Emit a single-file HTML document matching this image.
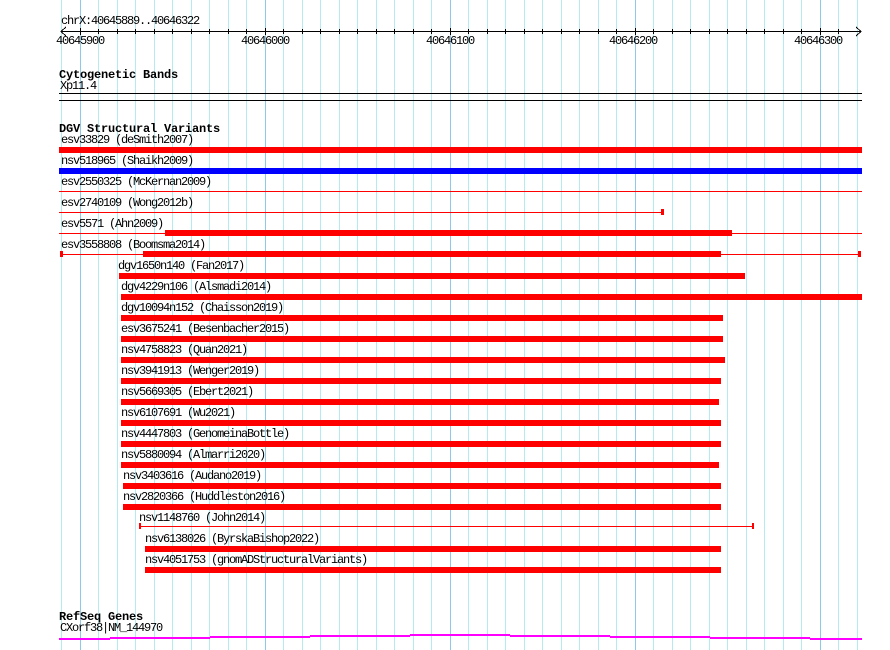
<!DOCTYPE html>
<html><head><style>
body{margin:0;width:890px;height:650px;background:#fff;position:relative;overflow:hidden;font-family:"Liberation Mono",monospace;}
.g{position:absolute;top:0;width:1px;height:650px;background:#b4eaf0}
.d{background:#90c8e8}
.t{position:absolute;font-size:12px;line-height:12px;letter-spacing:-1.2px;color:#000;white-space:pre;margin-top:0px}
.h{position:absolute;font-size:12px;line-height:12px;font-weight:bold;color:#000;letter-spacing:-0.2px;margin-top:1px}
.b{position:absolute;height:6px;background:#f00}
.l{position:absolute;height:1px;background:#f00}
.k{position:absolute;width:3px;height:6px;background:#f00}
.m{position:absolute;height:2px;background:#f0f}
</style></head><body>
<div class="g" style="left:61px"></div><div class="g d" style="left:80px"></div><div class="g" style="left:98px"></div><div class="g" style="left:117px"></div><div class="g" style="left:135px"></div><div class="g" style="left:154px"></div><div class="g" style="left:172px"></div><div class="g" style="left:191px"></div><div class="g" style="left:209px"></div><div class="g" style="left:228px"></div><div class="g" style="left:246px"></div><div class="g d" style="left:265px"></div><div class="g" style="left:283px"></div><div class="g" style="left:302px"></div><div class="g" style="left:320px"></div><div class="g" style="left:339px"></div><div class="g" style="left:357px"></div><div class="g" style="left:376px"></div><div class="g" style="left:394px"></div><div class="g" style="left:413px"></div><div class="g" style="left:431px"></div><div class="g d" style="left:450px"></div><div class="g" style="left:468px"></div><div class="g" style="left:487px"></div><div class="g" style="left:505px"></div><div class="g" style="left:524px"></div><div class="g" style="left:542px"></div><div class="g" style="left:561px"></div><div class="g" style="left:579px"></div><div class="g" style="left:598px"></div><div class="g" style="left:616px"></div><div class="g d" style="left:635px"></div><div class="g" style="left:653px"></div><div class="g" style="left:672px"></div><div class="g" style="left:690px"></div><div class="g" style="left:709px"></div><div class="g" style="left:727px"></div><div class="g" style="left:746px"></div><div class="g" style="left:764px"></div><div class="g" style="left:783px"></div><div class="g" style="left:801px"></div><div class="g d" style="left:820px"></div><div class="g" style="left:838px"></div><div class="g" style="left:857px"></div>

<div class="t" style="left:61px;top:15px">chrX:40645889..40646322</div>
<svg style="position:absolute;left:0;top:0" width="890" height="60">
<g stroke="#000" stroke-width="1" fill="none" shape-rendering="crispEdges">
<line x1="61" y1="31.5" x2="861" y2="31.5"/>
<polyline points="66,27 61,31.5 66,36"/>
<polyline points="856,27 861,31.5 856,36"/>
</g>
<g stroke="#000" shape-rendering="crispEdges">
<line x1="80.5" y1="28" x2="80.5" y2="35"/><line x1="98.5" y1="29" x2="98.5" y2="34"/><line x1="117.5" y1="29" x2="117.5" y2="34"/><line x1="135.5" y1="29" x2="135.5" y2="34"/><line x1="154.5" y1="29" x2="154.5" y2="34"/><line x1="172.5" y1="29" x2="172.5" y2="34"/><line x1="191.5" y1="29" x2="191.5" y2="34"/><line x1="209.5" y1="29" x2="209.5" y2="34"/><line x1="228.5" y1="29" x2="228.5" y2="34"/><line x1="246.5" y1="29" x2="246.5" y2="34"/><line x1="265.5" y1="28" x2="265.5" y2="35"/><line x1="283.5" y1="29" x2="283.5" y2="34"/><line x1="302.5" y1="29" x2="302.5" y2="34"/><line x1="320.5" y1="29" x2="320.5" y2="34"/><line x1="339.5" y1="29" x2="339.5" y2="34"/><line x1="357.5" y1="29" x2="357.5" y2="34"/><line x1="376.5" y1="29" x2="376.5" y2="34"/><line x1="394.5" y1="29" x2="394.5" y2="34"/><line x1="413.5" y1="29" x2="413.5" y2="34"/><line x1="431.5" y1="29" x2="431.5" y2="34"/><line x1="450.5" y1="28" x2="450.5" y2="35"/><line x1="468.5" y1="29" x2="468.5" y2="34"/><line x1="487.5" y1="29" x2="487.5" y2="34"/><line x1="505.5" y1="29" x2="505.5" y2="34"/><line x1="524.5" y1="29" x2="524.5" y2="34"/><line x1="542.5" y1="29" x2="542.5" y2="34"/><line x1="561.5" y1="29" x2="561.5" y2="34"/><line x1="579.5" y1="29" x2="579.5" y2="34"/><line x1="598.5" y1="29" x2="598.5" y2="34"/><line x1="616.5" y1="29" x2="616.5" y2="34"/><line x1="635.5" y1="28" x2="635.5" y2="35"/><line x1="653.5" y1="29" x2="653.5" y2="34"/><line x1="672.5" y1="29" x2="672.5" y2="34"/><line x1="690.5" y1="29" x2="690.5" y2="34"/><line x1="709.5" y1="29" x2="709.5" y2="34"/><line x1="727.5" y1="29" x2="727.5" y2="34"/><line x1="746.5" y1="29" x2="746.5" y2="34"/><line x1="764.5" y1="29" x2="764.5" y2="34"/><line x1="783.5" y1="29" x2="783.5" y2="34"/><line x1="801.5" y1="29" x2="801.5" y2="34"/><line x1="820.5" y1="28" x2="820.5" y2="35"/><line x1="838.5" y1="29" x2="838.5" y2="34"/>
</g></svg>
<div class="t" style="left:56px;top:35px">40645900</div>
<div class="t" style="left:241px;top:35px">40646000</div>
<div class="t" style="left:426px;top:35px">40646100</div>
<div class="t" style="left:609px;top:35px">40646200</div>
<div class="t" style="left:794px;top:35px">40646300</div>

<div class="h" style="left:59px;top:68px">Cytogenetic Bands</div>
<div class="t" style="left:60px;top:80px">Xp11.4</div>
<div style="position:absolute;left:59px;top:93px;width:803px;height:1px;background:#000"></div>
<div style="position:absolute;left:59px;top:100px;width:803px;height:1px;background:#000"></div>

<div class="h" style="left:59px;top:122px">DGV Structural Variants</div>
<div class="t" style="left:61px;top:134px">esv33829 (deSmith2007)</div>
<div class="b" style="left:59px;top:147px;width:803px"></div>
<div class="t" style="left:61px;top:155px">nsv518965 (Shaikh2009)</div>
<div class="b" style="left:59px;top:168px;width:803px;background:#00f"></div>
<div class="t" style="left:61px;top:176px">esv2550325 (McKernan2009)</div>
<div class="l" style="left:59px;top:191px;width:803px"></div>
<div class="t" style="left:61px;top:197px">esv2740109 (Wong2012b)</div>
<div class="l" style="left:59px;top:212px;width:603px"></div><div class="k" style="left:661px;top:209px"></div>
<div class="t" style="left:61px;top:218px">esv5571 (Ahn2009)</div>
<div class="l" style="left:59px;top:233px;width:803px"></div><div class="b" style="left:165px;top:230px;width:567px"></div>
<div class="t" style="left:61px;top:239px">esv3558808 (Boomsma2014)</div>
<div class="l" style="left:61px;top:254px;width:800px"></div><div class="k" style="left:60px;top:251px"></div><div class="k" style="left:858px;top:251px"></div><div class="b" style="left:143px;top:251px;width:578px"></div>

<div class="t" style="left:118px;top:260px">dgv1650n140 (Fan2017)</div>
<div class="b" style="left:119px;top:273px;width:626px"></div>
<div class="t" style="left:121px;top:281px">dgv4229n106 (Alsmadi2014)</div>
<div class="b" style="left:121px;top:294px;width:741px"></div>
<div class="t" style="left:121px;top:302px">dgv10094n152 (Chaisson2019)</div>
<div class="b" style="left:121px;top:315px;width:602px"></div>
<div class="t" style="left:121px;top:323px">esv3675241 (Besenbacher2015)</div>
<div class="b" style="left:121px;top:336px;width:602px"></div>
<div class="t" style="left:121px;top:344px">nsv4758823 (Quan2021)</div>
<div class="b" style="left:121px;top:357px;width:604px"></div>
<div class="t" style="left:121px;top:365px">nsv3941913 (Wenger2019)</div>
<div class="b" style="left:121px;top:378px;width:600px"></div>
<div class="t" style="left:121px;top:386px">nsv5669305 (Ebert2021)</div>
<div class="b" style="left:121px;top:399px;width:598px"></div>
<div class="t" style="left:121px;top:407px">nsv6107691 (Wu2021)</div>
<div class="b" style="left:121px;top:420px;width:600px"></div>
<div class="t" style="left:121px;top:428px">nsv4447803 (GenomeinaBottle)</div>
<div class="b" style="left:121px;top:441px;width:600px"></div>
<div class="t" style="left:121px;top:449px">nsv5880094 (Almarri2020)</div>
<div class="b" style="left:121px;top:462px;width:598px"></div>
<div class="t" style="left:123px;top:470px">nsv3403616 (Audano2019)</div>
<div class="b" style="left:123px;top:483px;width:598px"></div>
<div class="t" style="left:123px;top:491px">nsv2820366 (Huddleston2016)</div>
<div class="b" style="left:123px;top:504px;width:598px"></div>
<div class="t" style="left:139px;top:512px">nsv1148760 (John2014)</div>
<div class="l" style="left:139px;top:526px;width:615px"></div><div class="k" style="left:139px;top:523px;width:2px"></div><div class="k" style="left:752px;top:523px;width:2px"></div>
<div class="t" style="left:145px;top:533px">nsv6138026 (ByrskaBishop2022)</div>
<div class="b" style="left:145px;top:546px;width:576px"></div>
<div class="t" style="left:145px;top:554px">nsv4051753 (gnomADStructuralVariants)</div>
<div class="b" style="left:145px;top:567px;width:576px"></div>

<div class="h" style="left:59px;top:610px">RefSeq Genes</div>
<div class="t" style="left:60px;top:622px">CXorf38|NM_144970</div>
<div class="m" style="left:59px;top:638px;width:51px"></div>
<div class="m" style="left:110px;top:637px;width:100px"></div>
<div class="m" style="left:210px;top:636px;width:100px"></div>
<div class="m" style="left:310px;top:635px;width:100px"></div>
<div class="m" style="left:410px;top:634px;width:100px"></div>
<div class="m" style="left:510px;top:635px;width:100px"></div>
<div class="m" style="left:610px;top:636px;width:100px"></div>
<div class="m" style="left:710px;top:637px;width:100px"></div>
<div class="m" style="left:810px;top:638px;width:52px"></div>
</body></html>
